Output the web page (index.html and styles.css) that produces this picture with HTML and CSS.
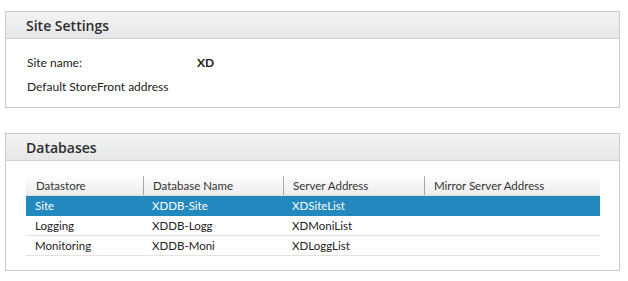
FILE: index.html
```html
<!DOCTYPE html>
<html>
<head>
<meta charset="utf-8">
<link rel="stylesheet" href="styles.css">
</head>
<body>
<section class="panel">
  <div class="panel-header">Site Settings</div>
  <div class="panel-body settings">
    <div class="setting-row"><span class="label">Site name:</span><span class="value">XD</span></div>
    <div class="setting-row"><span class="label">Default StoreFront address</span><span class="value"></span></div>
  </div>
</section>
<section class="panel panel-db">
  <div class="panel-header">Databases</div>
  <div class="panel-body databases">
    <table class="grid">
      <thead>
        <tr>
          <th class="c1"><span>Datastore</span></th>
          <th class="c2"><span>Database Name</span></th>
          <th class="c3"><span>Server Address</span></th>
          <th class="c4"><span>Mirror Server Address</span></th>
        </tr>
      </thead>
      <tbody>
        <tr class="selected"><td>Site</td><td>XDDB-Site</td><td>XDSiteList</td><td></td></tr>
        <tr><td>Logging</td><td>XDDB-Logg</td><td>XDMoniList</td><td></td></tr>
        <tr><td>Monitoring</td><td>XDDB-Moni</td><td>XDLoggList</td><td></td></tr>
      </tbody>
    </table>
  </div>
</section>
</body>
</html>
```
FILE: styles.css
```css
html, body {
  margin: 0;
  padding: 0;
  background: #ffffff;
}
body {
  padding: 11px 9px 0 5px;
  font-family: "Lato", "Open Sans", sans-serif;
  font-size: 12px;
  color: #222;
}
.panel {
  width: 613px;
  border: 1px solid #c9c9c9;
  background: #fff;
}
.panel-db {
  margin-top: 25px;
}
.panel-header {
  height: 26px;
  line-height: 28px;
  padding-left: 20px;
  font-family: "Open Sans", "Lato", sans-serif;
  font-size: 14px;
  font-weight: 600;
  color: #2e2e2e;
  background: linear-gradient(#f3f3f3, #e6e7e9);
  border-bottom: 1px solid #d0d0d0;
}
.settings {
  height: 68px;
  box-sizing: border-box;
  padding: 11px 0 0 21px;
}
.setting-row {
  display: flex;
  height: 24px;
  align-items: center;
}
.label {
  width: 170px;
}
.value {
  font-weight: 700;
}
.databases {
  padding: 14px 19px 14px 20px;
}
.grid {
  width: 100%;
  border-collapse: collapse;
  table-layout: fixed;
  font-size: 11.5px;
}
.grid th {
  height: 20px;
  padding: 0;
  text-align: left;
  font-weight: 400;
  color: #333;
  background: linear-gradient(#ffffff, #ececed);
  border-bottom: 1px solid #dcdcdc;
}
.grid th span {
  display: block;
  padding-left: 9px;
  border-left: 1px solid #a8a8a8;
  line-height: 19px;
}
.grid th.c1 span {
  border-left-color: transparent;
}
.grid th.c1 { width: 117px; }
.grid th.c2 { width: 140px; }
.grid th.c3 { width: 141px; }
.grid td {
  height: 19px;
  padding: 0 0 0 9px;
  border-bottom: 1px solid #e3e3e3;
  color: #222;
  white-space: nowrap;
}
.grid tr.selected td {
  background: #2388bd;
  color: #fff;
  border-bottom-color: #2388bd;
}
```
